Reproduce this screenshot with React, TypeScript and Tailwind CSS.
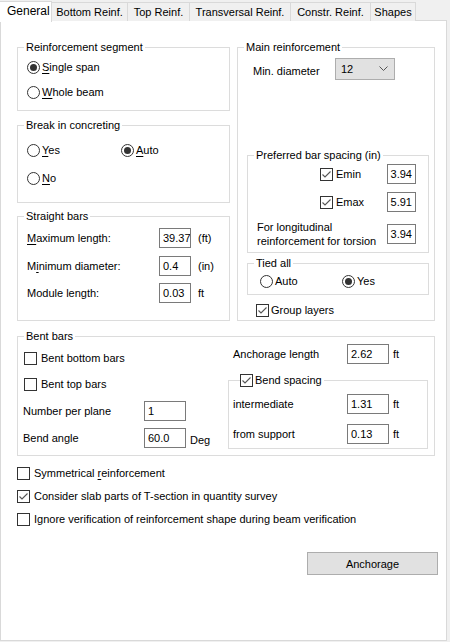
import type { ReactNode } from 'react';

const tabs = [
  { label: 'Bottom Reinf.', w: 'w-[76px]' },
  { label: 'Top Reinf.', w: 'w-[62px]' },
  { label: 'Transversal Reinf.', w: 'w-[101px]' },
  { label: 'Constr. Reinf.', w: 'w-[80px]' },
  { label: 'Shapes', w: 'w-[45px]' },
];

// access-key underline, as in the win32 dialog
const U = ({ children }: { children: ReactNode }) => <span className="underline underline-offset-2">{children}</span>;

const Radio = ({ checked, children }: { checked?: boolean; children: ReactNode }) => (
  <div className="flex items-center h-[14px]">
    <span className="w-[13px] h-[13px] rounded-full border border-[#333] bg-white flex items-center justify-center shrink-0">
      {checked && <span className="w-[7px] h-[7px] rounded-full bg-[#333]" />}
    </span>
    <span className="ml-[2px]">{children}</span>
  </div>
);

const Check = ({ checked, children, gap = 'ml-[4px]' }: { checked?: boolean; children: ReactNode; gap?: string }) => (
  <div className="flex items-center h-[14px]">
    <span className="w-[13px] h-[13px] border border-[#333] bg-white flex items-center justify-center shrink-0">
      {checked && (
        <svg width="11" height="11" viewBox="0 0 11 11">
          <path d="M1.5 5.5 L4 8 L9.5 2.5" fill="none" stroke="#555" strokeWidth="1.1" />
        </svg>
      )}
    </span>
    <span className={gap}>{children}</span>
  </div>
);

const Field = ({ value, w = 'w-[32px]', right }: { value: string; w?: string; right?: boolean }) => (
  <div
    className={`${w} h-[20px] border border-[#7a7a7a] bg-white flex items-center overflow-hidden whitespace-nowrap px-[3px] ${
      right ? 'justify-end' : ''
    }`}
  >
    {value}
  </div>
);

const Group = ({ title, className, children }: { title: ReactNode; className?: string; children: ReactNode }) => (
  <fieldset className={`border border-[#dcdcdc] ${className ?? ''}`}>
    <legend className="ml-[6px] px-[2px] leading-[14px] h-[14px]">{title}</legend>
    {children}
  </fieldset>
);

export default function App() {
  return (
    <div className="w-[450px] h-[642px] bg-[#f0f0f0] font-['Liberation_Sans',Arial,sans-serif] text-[11px] text-black leading-[14px]">
      {/* tab strip */}
      <div className="flex items-end h-[21px]">
        <div className="w-[52px] h-[21px] bg-white border-t border-r border-[#d9d9d9] relative z-10 -mb-px flex items-center pl-[7px] pb-[2px] text-[12px]">
          General
        </div>
        {tabs.map((t) => (
          <div
            key={t.label}
            className={`${t.w} h-[19px] bg-[#f0f0f0] border border-l-0 border-b-0 border-[#d9d9d9] flex items-center justify-center`}
          >
            {t.label}
          </div>
        ))}
      </div>

      {/* tab page */}
      <div className="w-[447px] h-[621px] bg-white border border-[#d9d9d9] -mt-px pl-[16px] pt-[19px]">
        <div className="flex">
          {/* left column */}
          <div className="w-[213px] flex flex-col">
            <Group title="Reinforcement segment" className="h-[71px]">
              <div className="pl-[9px]">
                <div className="mt-[6px]">
                  <Radio checked>
                    <U>S</U>ingle span
                  </Radio>
                </div>
                <div className="mt-[11px]">
                  <Radio>
                    <U>W</U>hole beam
                  </Radio>
                </div>
              </div>
            </Group>

            <Group title="Break in concreting" className="h-[85px] mt-[7px]">
              <div className="pl-[9px]">
                <div className="mt-[11px] flex">
                  <div className="w-[94px]">
                    <Radio>
                      <U>Y</U>es
                    </Radio>
                  </div>
                  <Radio checked>
                    <U>A</U>uto
                  </Radio>
                </div>
                <div className="mt-[14px]">
                  <Radio>
                    <U>N</U>o
                  </Radio>
                </div>
              </div>
            </Group>

            <Group title="Straight bars" className="h-[112px] mt-[6px]">
              <div className="pl-[9px] mt-[5px] flex flex-col gap-[8px]">
                <div className="flex items-center">
                  <span className="w-[132px]">
                    <U>M</U>aximum length:
                  </span>
                  <Field value="39.37" />
                  <span className="ml-[7px]">(ft)</span>
                </div>
                <div className="flex items-center">
                  <span className="w-[132px]">
                    M<U>i</U>nimum diameter:
                  </span>
                  <Field value="0.4" />
                  <span className="ml-[7px]">(in)</span>
                </div>
                <div className="flex items-center -mt-px">
                  <span className="w-[132px]">Module length:</span>
                  <Field value="0.03" />
                  <span className="ml-[7px]">ft</span>
                </div>
              </div>
            </Group>
          </div>

          {/* right column */}
          <div className="w-[198px] ml-[7px] flex flex-col">
            <Group title="Main reinforcement" className="h-[281px]">
              <div className="mt-[4px] flex items-center pl-[15px]">
                <span className="w-[82px] pt-[3px]">Min. diameter</span>
                <div className="w-[60px] h-[22px] bg-[#e1e1e1] border border-[#adadad] flex items-center pl-[5px] pr-[6px] justify-between">
                  <span>12</span>
                  <svg width="9" height="6" viewBox="0 0 9 6">
                    <path d="M0.5 0.5 L4.5 4.5 L8.5 0.5" fill="none" stroke="#555" strokeWidth="1" />
                  </svg>
                </div>
              </div>

              <Group title="Preferred bar spacing (in)" className="w-[182px] h-[105px] ml-[9px] mt-[68px]">
                <div className="mt-[2px] pr-[12px] flex flex-col gap-[8px]">
                  <div className="flex items-center justify-end">
                    <div className="w-[67px]">
                      <Check checked gap="ml-[3px]">Emin</Check>
                    </div>
                    <Field value="3.94" w="w-[29px]" right />
                  </div>
                  <div className="flex items-center justify-end">
                    <div className="w-[67px]">
                      <Check checked gap="ml-[3px]">Emax</Check>
                    </div>
                    <Field value="5.91" w="w-[29px]" right />
                  </div>
                  <div className="flex items-center justify-between pl-[9px]">
                    <span className="leading-[14px]">
                      For longitudinal
                      <br />
                      reinforcement for torsion
                    </span>
                    <Field value="3.94" w="w-[29px]" right />
                  </div>
                </div>
              </Group>

              <Group title="Tied all" className="w-[182px] h-[39px] ml-[9px] mt-[3px]">
                <div className="mt-[4px] pl-[12px] flex">
                  <div className="w-[82px]">
                    <Radio>Auto</Radio>
                  </div>
                  <Radio checked>Yes</Radio>
                </div>
              </Group>

              <div className="mt-[8px] pl-[18px]">
                <Check checked gap="ml-[2px]">Group layers</Check>
              </div>
            </Group>
          </div>
        </div>

        {/* bent bars */}
        <Group title="Bent bars" className="w-[418px] h-[127px] mt-[8px]">
          <div className="flex">
            <div className="w-[210px] pl-[5px] flex flex-col">
              <div className="mt-[5px] h-[20px] flex items-center ml-[1px]">
                <Check>Bent bottom bars</Check>
              </div>
              <div className="mt-[6px] h-[20px] flex items-center ml-[1px]">
                <Check>Bent top bars</Check>
              </div>
              <div className="mt-[7px] flex items-center">
                <span className="w-[121px]">Number per plane</span>
                <Field value="1" w="w-[42px]" />
              </div>
              <div className="mt-[7px] flex items-center">
                <span className="w-[121px]">Bend angle</span>
                <Field value="60.0" w="w-[42px]" />
                <span className="ml-[4px] pt-[3px]">Deg</span>
              </div>
            </div>

            <div className="w-[200px] flex flex-col">
              <div className="mt-[1px] flex items-center pl-[5px]">
                <span className="w-[114px]">Anchorage length</span>
                <Field value="2.62" w="w-[42px]" />
                <span className="ml-[4px]">ft</span>
              </div>
              <fieldset className="border border-[#dcdcdc] h-[76px] mt-[9px]">
                <legend className="ml-[11px] pr-[2px] h-[14px]">
                  <Check checked gap="ml-[2px]">Bend spacing</Check>
                </legend>
                <div className="pl-[4px]">
                  <div className="mt-[7px] flex items-center">
                    <span className="w-[114px]">intermediate</span>
                    <Field value="1.31" w="w-[42px]" />
                    <span className="ml-[4px]">ft</span>
                  </div>
                  <div className="mt-[10px] flex items-center">
                    <span className="w-[114px]">from support</span>
                    <Field value="0.13" w="w-[42px]" />
                    <span className="ml-[4px]">ft</span>
                  </div>
                </div>
              </fieldset>
            </div>
          </div>
        </Group>

        <div className="mt-[10px] flex flex-col gap-[9px]">
          <Check>
            Symmetrical <U>r</U>einforcement
          </Check>
          <Check checked>Consider slab parts of T-section in quantity survey</Check>
          <Check>Ignore verification of reinforcement shape during beam verification</Check>
        </div>

        <button className="ml-[290px] mt-[26px] w-[131px] h-[23px] bg-[#e1e1e1] border border-[#adadad] flex items-center justify-center">
          Anchorage
        </button>
      </div>
    </div>
  );
}
